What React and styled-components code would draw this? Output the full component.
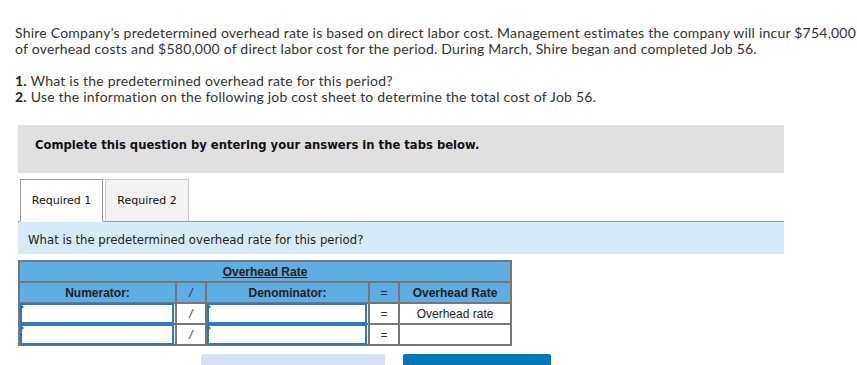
import React from "react";
import styled, { createGlobalStyle } from "styled-components";

const GlobalStyle = createGlobalStyle`
  html, body {
    margin: 0;
    padding: 0;
    background: #fff;
  }
`;

const Page = styled.div`
  width: 857px;
  height: 365px;
  overflow: hidden;
  padding: 25px 0 0 15px;
  box-sizing: border-box;
`;

const Intro = styled.p`
  margin: 0;
  font-family: Lato, "Open Sans", sans-serif;
  font-size: 14px;
  line-height: 16px;
  color: #333;
  letter-spacing: 0.22px;
`;

const Questions = styled(Intro)`
  margin-top: 16px;
  b {
    font-weight: 700;
    color: #222;
  }
`;

const Panel = styled.div`
  margin: 20px 0 0 3px;
  width: 766px;
`;

const Banner = styled.div`
  height: 48px;
  box-sizing: border-box;
  background: #e0e0e0;
  display: flex;
  align-items: center;
  padding: 0 0 8px 17px;
  font-family: "DejaVu Sans", Verdana, sans-serif;
  font-weight: 700;
  font-size: 11.6px;
  color: #111;
`;

const TabRow = styled.div`
  display: flex;
  gap: 2px;
  margin-top: 6px;
  padding-left: 2px;
  border-bottom: 1px solid #999;
`;

const Tab = styled.div`
  width: ${(p) => p.$w}px;
  height: 43px;
  box-sizing: border-box;
  display: flex;
  align-items: center;
  justify-content: center;
  margin-bottom: -1px;
  font-family: "DejaVu Sans", Verdana, sans-serif;
  font-size: 11px;
  color: #111;
  background: ${(p) => (p.$active ? "#fff" : "#f2f2f2")};
  border: 1px solid ${(p) => (p.$active ? "#999" : "#ccc")};
  border-bottom: ${(p) => (p.$active ? "1px solid #fff" : "1px solid #999")};
`;

const Prompt = styled.div`
  height: 32px;
  box-sizing: border-box;
  background: #d5ecf8;
  display: flex;
  align-items: center;
  padding: 3px 0 0 10px;
  font-family: "DejaVu Sans", Verdana, sans-serif;
  font-size: 11.7px;
  color: #222;
`;

const Table = styled.table`
  margin-top: 6px;
  border-collapse: collapse;
  table-layout: fixed;
  width: 492px;
  font-family: "Liberation Sans", Arial, sans-serif;
  font-size: 12px;
  color: #222;
  border: 2px solid #777;
`;

const HeadCell = styled.th`
  background: #5eade3;
  border: 2px solid #777;
  height: 19px;
  padding: 0;
  font-weight: ${(p) => (p.$light ? 400 : 700)};
  text-align: center;
  color: #222;
  u {
    text-decoration: underline;
  }
`;

const Cell = styled.td`
  border: 2px solid #777;
  height: 18px;
  padding: 0;
  text-align: center;
  background: #fff;
`;

const InputCell = styled.td`
  border: 2px solid #777;
  height: 18px;
  padding: 0;
  position: relative;
`;

const Field = styled.div`
  border: 2px solid #3279b5;
  box-sizing: border-box;
  margin: -1px 1px -1px 0;
  height: 21px;
`;

const Marker = styled.span`
  position: absolute;
  left: 0;
  top: 0;
  width: 0;
  height: 0;
  border-top: 3px solid transparent;
  border-bottom: 3px solid transparent;
  border-left: 4px solid #1f6fbf;
`;

const Op = styled.span`
  font-style: ${(p) => (p.$italic ? "italic" : "normal")};
  color: #333;
`;

const Buttons = styled.div`
  display: flex;
  margin: 8px 0 0 183px;
  gap: 18px;
`;

const Button = styled.div`
  width: ${(p) => p.$w}px;
  height: 20px;
  background: ${(p) => (p.$primary ? "#0077b9" : "#d4e3f1")};
  border-radius: 2px 2px 0 0;
`;

const InputRow = ({ result }) => (
  <tr>
    <InputCell>
      <Field />
      <Marker />
    </InputCell>
    <Cell>
      <Op $italic>/</Op>
    </Cell>
    <InputCell>
      <Field />
      <Marker />
    </InputCell>
    <Cell>
      <Op>=</Op>
    </Cell>
    <Cell>{result}</Cell>
  </tr>
);

export default function App() {
  return (
    <Page>
      <GlobalStyle />
      <Intro>
        Shire Company’s predetermined overhead rate is based on direct labor cost. Management estimates the company will incur $754,000
        <br />
        of overhead costs and $580,000 of direct labor cost for the period. During March, Shire began and completed Job 56.
      </Intro>
      <Questions>
        <b>1.</b> What is the predetermined overhead rate for this period?
        <br />
        <b>2.</b> Use the information on the following job cost sheet to determine the total cost of Job 56.
      </Questions>
      <Panel>
        <Banner>Complete this question by entering your answers in the tabs below.</Banner>
        <TabRow>
          <Tab $active $w={83}>Required 1</Tab>
          <Tab $w={84}>Required 2</Tab>
        </TabRow>
        <Prompt>What is the predetermined overhead rate for this period?</Prompt>
        <Table>
          <colgroup>
            <col style={{ width: 157 }} />
            <col style={{ width: 30 }} />
            <col style={{ width: 163 }} />
            <col style={{ width: 30 }} />
            <col style={{ width: 112 }} />
          </colgroup>
          <thead>
            <tr>
              <HeadCell colSpan={5}>
                <u>Overhead Rate</u>
              </HeadCell>
            </tr>
            <tr>
              <HeadCell>Numerator:</HeadCell>
              <HeadCell $light>
                <Op $italic>/</Op>
              </HeadCell>
              <HeadCell>Denominator:</HeadCell>
              <HeadCell $light>=</HeadCell>
              <HeadCell>Overhead Rate</HeadCell>
            </tr>
          </thead>
          <tbody>
            <InputRow result="Overhead rate" />
            <InputRow result="" />
          </tbody>
        </Table>
        <Buttons>
          <Button $w={184} />
          <Button $primary $w={148} />
        </Buttons>
      </Panel>
    </Page>
  );
}
